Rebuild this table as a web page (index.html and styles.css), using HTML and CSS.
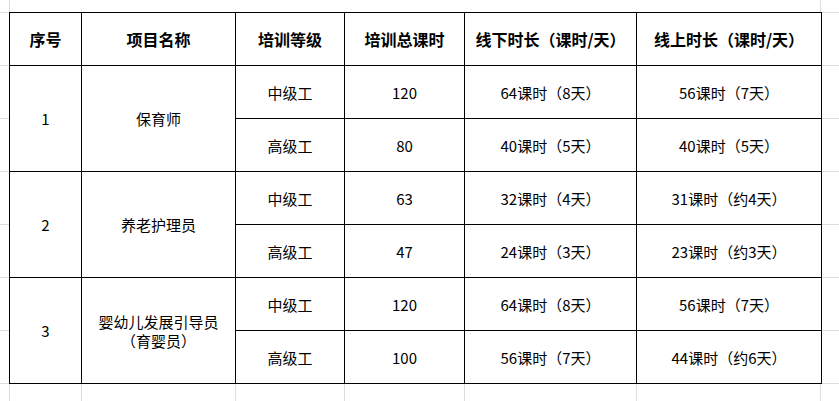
FILE: index.html
```html
<!DOCTYPE html>
<html lang="zh-CN">
<head>
<meta charset="utf-8">
<title>培训课时表</title>
<link rel="stylesheet" href="styles.css">
</head>
<body>
<div class="sheet">
<table class="plan">
  <colgroup>
    <col class="c-no"><col class="c-name"><col class="c-level"><col class="c-total"><col class="c-off"><col class="c-on">
  </colgroup>
  <thead>
    <tr>
      <th>序号</th><th>项目名称</th><th>培训等级</th><th>培训总课时</th><th>线下时长（课时/天）</th><th>线上时长（课时/天）</th>
    </tr>
  </thead>
  <tbody>
    <tr><td rowspan="2">1</td><td rowspan="2">保育师</td><td>中级工</td><td>120</td><td>64课时（8天）</td><td>56课时（7天）</td></tr>
    <tr><td>高级工</td><td>80</td><td>40课时（5天）</td><td>40课时（5天）</td></tr>
    <tr><td rowspan="2">2</td><td rowspan="2">养老护理员</td><td>中级工</td><td>63</td><td>32课时（4天）</td><td>31课时（约4天）</td></tr>
    <tr><td>高级工</td><td>47</td><td>24课时（3天）</td><td>23课时（约3天）</td></tr>
    <tr><td rowspan="2">3</td><td rowspan="2" class="wrap">婴幼儿发展引导员<br>（育婴员）</td><td>中级工</td><td>120</td><td>64课时（8天）</td><td>56课时（7天）</td></tr>
    <tr><td>高级工</td><td>100</td><td>56课时（7天）</td><td>44课时（约6天）</td></tr>
  </tbody>
</table>
</div>
</body>
</html>
```
FILE: styles.css
```css
html, body {
  margin: 0;
  padding: 0;
  background: #fff;
}
body {
  width: 839px;
  height: 401px;
  overflow: hidden;
  font-family: "Noto Sans CJK SC", "Noto Sans", sans-serif;
  color: #000;
}
.sheet {
  height: 401px;
  padding: 12px 0 0 9px;
  box-sizing: border-box;
  background-color: #fff;
  background-image:
    linear-gradient(#dedede, #dedede),
    linear-gradient(#dedede, #dedede),
    linear-gradient(#dedede, #dedede),
    linear-gradient(#dedede, #dedede),
    linear-gradient(#dedede, #dedede),
    linear-gradient(#dedede, #dedede),
    linear-gradient(#dedede, #dedede),
    linear-gradient(#dedede, #dedede),
    linear-gradient(#dedede, #dedede),
    linear-gradient(to bottom, #dedede 1px, transparent 1px);
  background-repeat: no-repeat, no-repeat, no-repeat, no-repeat, no-repeat, no-repeat, no-repeat, no-repeat, no-repeat, repeat;
  background-size: 1px 12px, 1px 12px, 1px 20px, 1px 20px, 1px 20px, 1px 20px, 1px 20px, 1px 20px, 1px 20px, 100% 53px;
  background-position: 9px 0, 820px 0, 9px 383px, 81px 383px, 235px 383px, 344px 383px, 464px 383px, 636px 383px, 820px 383px, 0 12px;
}
.plan {
  border-collapse: collapse;
  table-layout: fixed;
  width: 812px;
  background: #fff;
}
.c-no { width: 72px; }
.c-name { width: 154px; }
.c-level { width: 109px; }
.c-total { width: 120px; }
.c-off { width: 172px; }
.c-on { width: 185px; }
.plan th,
.plan td {
  border: 1px solid #000;
  height: 52px;
  padding: 0;
  text-align: center;
  vertical-align: middle;
  font-size: 15px;
  line-height: 19px;
  white-space: nowrap;
}
.plan th {
  font-size: 16px;
  font-weight: 700;
}
.plan td.wrap {
  line-height: 19px;
}
```
